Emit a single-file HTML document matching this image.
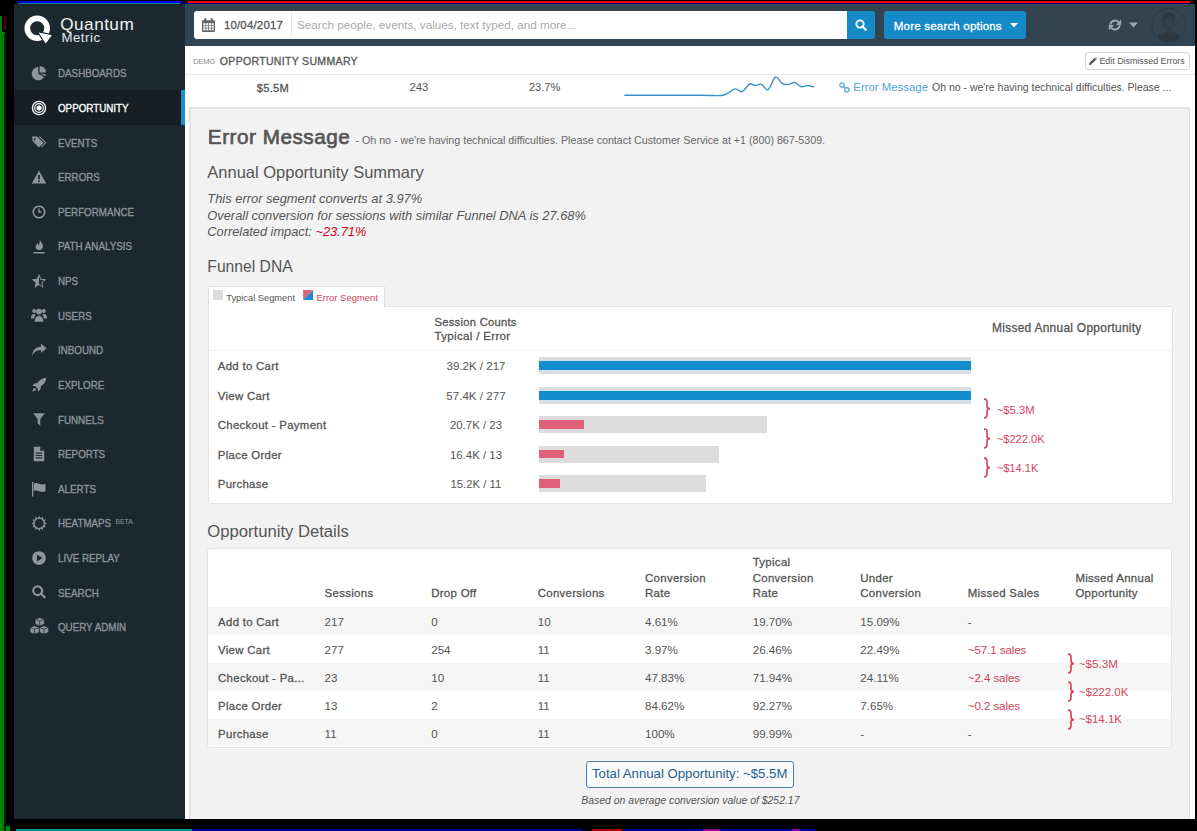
<!DOCTYPE html>
<html><head><meta charset="utf-8">
<style>
*{box-sizing:border-box;margin:0;padding:0}
html,body{width:1197px;height:831px;overflow:hidden;background:#000;font-family:"Liberation Sans",sans-serif;color:#555;position:relative}
.a{position:absolute;white-space:nowrap}
#side{left:14px;top:4px;width:171px;height:815px;background:#1c2830}
.nav{position:absolute;left:14px;width:171px;height:35px;color:#8c959c;font-size:11px;-webkit-text-stroke:0.35px #8c959c}
.nav .t{position:absolute;left:44px;white-space:nowrap;line-height:12px;transform:scaleX(0.89);transform-origin:0 0;margin-top:-0.5px}
.nav svg{position:absolute;left:16.7px;width:16px;height:16px;fill:#8c959c}
.nav.act{background:#161f26;color:#fff;-webkit-text-stroke:0.35px #fff}
.nav.act svg{fill:#fff}
.nav.act:after{content:"";position:absolute;right:0;top:0;width:4px;height:100%;background:#1b8fd0}
#hdr{left:185px;top:4px;width:1010px;height:42px;background:#324452}
#main{left:185px;top:46px;width:1010px;height:773px;background:#fff}
#panel{left:189px;top:107px;width:1001px;height:712px;background:#f2f2f2;border:2px solid #e2e3e5;border-right-color:#dcdcdc;border-right-width:1.5px;border-bottom:none}
.wp{background:#fff;border:1px solid #e4e4e4;border-radius:3px}
</style></head><body>
<div class="a" style="left:0;top:16px;width:2px;height:16px;background:#008200"></div>
<div class="a" style="left:0;top:32px;width:4.5px;height:799px;background:#008200"></div>
<div class="a" style="left:0;top:826px;width:10px;height:5px;background:#008200;border-bottom-left-radius:0;"></div>
<div class="a" style="left:4px;top:16px;width:1.5px;height:14px;background:#5a0000"></div>
<div class="a" style="left:4px;top:34px;width:2px;height:797px;background:#002200"></div>
<div class="a" style="left:18px;top:1px;width:164px;height:2px;background:#0000f0"></div>
<div class="a" style="left:18px;top:3px;width:162px;height:1px;background:#0a8a7a"></div>
<div class="a" style="left:188px;top:1px;width:1002px;height:2px;background:#f00"></div>
<div class="a" style="left:180px;top:3px;width:1010px;height:1px;background:#000080"></div>
<div class="a" style="left:16px;top:829px;width:176px;height:2px;background:#008a8a"></div>
<div class="a" style="left:192px;top:829px;width:391px;height:2px;background:#000090"></div>
<div class="a" style="left:592px;top:829px;width:30px;height:2px;background:#a00000"></div>
<div class="a" style="left:624px;top:829px;width:192px;height:2px;background:#000090"></div>
<div class="a" style="left:703px;top:829px;width:17px;height:2px;background:#900090"></div>
<div class="a" style="left:792px;top:829px;width:8px;height:2px;background:#900090"></div>
<div class="a" id="side"></div>
<svg class="a" style="left:20px;top:12px" width="36" height="36" viewBox="20 12 36 36">
<circle cx="37.2" cy="28.2" r="9.9" fill="none" stroke="#fff" stroke-width="5.7"/>
<path d="M38.6 32.4L51.8 35.3L45.7 43.6z" fill="#fff" stroke="#1c2830" stroke-width="2.4" stroke-linejoin="miter"/>
<path d="M38.6 32.4L51.8 35.3L45.7 43.6z" fill="#fff"/>
</svg>
<div class="a" style="left:60.3px;top:13.6px;color:#f2f4f5;font-size:17.2px;line-height:20px;letter-spacing:0.45px">Quantum</div>
<div class="a" style="left:61.4px;top:29.6px;color:#e3e6e8;font-size:13.3px;line-height:16px;letter-spacing:0.5px">Metric</div>
<!--S1--><div class="nav" style="top:55.00px"><svg viewBox="0 0 16 16" style="top:10px"><path d="M7.30 8.70L13.02 12.00A6.6 6.6 0 1 1 7.30 2.10z"/><path d="M8.60 7.40L8.60 1.00A6.4 6.4 0 0 1 15.00 7.40z"/><path d="M8.80 8.60L14.98 9.14A6.2 6.2 0 0 1 14.42 11.22z"/></svg><div class="t" style="top:12.8px">DASHBOARDS</div></div>
<div class="nav act" style="top:89.63px"><svg viewBox="0 0 16 16" style="top:10px" stroke="#fff"><circle cx="8" cy="8" r="6.6" style="fill:none" stroke-width="1.3"/><circle cx="8" cy="8" r="4.3" style="fill:none" stroke-width="1.2"/><circle cx="8" cy="8" r="2.2"/></svg><div class="t" style="top:12.8px">OPPORTUNITY</div></div>
<div class="nav" style="top:124.26px"><svg viewBox="0 0 16 16" style="top:10px"><path d="M1 2.5h5.2l6.3 6.3-4.6 4.6L1.6 7.1zM3.6 4.2a1 1 0 1 0 .01 0z"/><path d="M7.6 2.5h1.4l6.3 6.3-4.6 4.6-.7-.7 3.9-3.9z"/></svg><div class="t" style="top:12.8px">EVENTS</div></div>
<div class="nav" style="top:158.89px"><svg viewBox="0 0 16 16" style="top:10px"><path d="M8 1.5l7.2 13H.8zM7.1 6v4.3h1.8V6zM7.1 11.4v1.7h1.8v-1.7z" fill-rule="evenodd"/></svg><div class="t" style="top:12.8px">ERRORS</div></div>
<div class="nav" style="top:193.52px"><svg viewBox="0 0 16 16" style="top:10px"><path d="M8 1.5a6.5 6.5 0 1 0 .01 0zm0 1.6a4.9 4.9 0 1 1-.01 0zM7.3 4.5v4.2h3.5V7.4H8.7V4.5z" fill-rule="evenodd"/></svg><div class="t" style="top:12.8px">PERFORMANCE</div></div>
<div class="nav" style="top:228.15px"><svg viewBox="0 0 16 16" style="top:10px"><path d="M8.3 .6C8.9 3.6 12.2 5.3 12 8.8 11.8 11 10.2 12.1 8.2 12.1 6 12.1 4.5 10.7 4.7 8.6 4.9 6.8 6.4 5.9 6.9 4.8 7.4 6.2 7.3 7.2 7 8.1 8.9 6.6 9.1 3.6 8.3.6z"/><rect x="2.4" y="14" width="11.2" height="1.5"/></svg><div class="t" style="top:12.8px">PATH ANALYSIS</div></div>
<div class="nav" style="top:262.78px"><svg viewBox="0 0 16 16" style="top:10px"><path d="M8 1L10.06 5.77 15.23 6.25 11.33 9.68 12.47 14.75 8 12.1 3.53 14.75 4.67 9.68 .77 6.25 5.94 5.77zM8 3.6V11l3.1 1.9-.75-3.4 2.65-2.35-3.5-.35z" fill-rule="evenodd"/></svg><div class="t" style="top:12.8px">NPS</div></div>
<div class="nav" style="top:297.41px"><svg viewBox="0 0 16 16" style="top:10px"><circle cx="8" cy="4.6" r="2.9"/><circle cx="3.2" cy="4" r="2"/><circle cx="12.8" cy="4" r="2"/><path d="M3.6 14.8c0-3.6 1.8-6 4.4-6s4.4 2.4 4.4 6z"/><path d="M-.2 11.5c0-2.6 1.3-4.6 3.4-4.6.7 0 1.3.2 1.7.5-.9 1-1.6 2.4-1.8 4.1zM16.2 11.5c0-2.6-1.3-4.6-3.4-4.6-.7 0-1.3.2-1.7.5.9 1 1.6 2.4 1.8 4.1z"/></svg><div class="t" style="top:12.8px">USERS</div></div>
<div class="nav" style="top:332.04px"><svg viewBox="0 0 16 16" style="top:10px"><path d="M10 1.5l5.5 4.8L10 11V8.2c-4.2 0-6.6 1.2-8.8 5.5.4-5.4 3.5-8.6 8.8-8.9z"/></svg><div class="t" style="top:12.8px">INBOUND</div></div>
<div class="nav" style="top:366.67px"><svg viewBox="0 0 16 16" style="top:10px"><path d="M15.3.7c-4 .2-6.6 2-8.8 5.2L3.2 6.4 1.3 8.6l3 .6 2.3 2.3.6 3 2.2-1.9.5-3.3C13.2 7 15 4.6 15.3.7zM3.8 10.8c-1.3.4-2.2 2-2.3 3.7 1.7-.1 3.3-1 3.7-2.3z"/></svg><div class="t" style="top:12.8px">EXPLORE</div></div>
<div class="nav" style="top:401.30px"><svg viewBox="0 0 16 16" style="top:10px"><path d="M2.2 2.2h11.6L9.3 8.2v6.6L6.7 12.4V8.2z"/></svg><div class="t" style="top:12.8px">FUNNELS</div></div>
<div class="nav" style="top:435.93px"><svg viewBox="0 0 16 16" style="top:10px"><path d="M2.8.8h6.6l3.8 3.8v10.6H2.8z"/><path d="M9.2.8v3.9h4z" style="fill:#1c2830"/><path d="M4.8 6.6h6.4v1.2H4.8zM4.8 8.9h6.4v1.2H4.8zM4.8 11.2h6.4v1.2H4.8z" style="fill:#1c2830"/></svg><div class="t" style="top:12.8px">REPORTS</div></div>
<div class="nav" style="top:470.56px"><svg viewBox="0 0 16 16" style="top:10px"><rect x="1" y="1" width="1.3" height="14.5"/><path d="M2.8 2.5c2.5-1.3 4.5 0 6.3.6 1.8.6 3.6.4 5.4-.4v7.5c-1.8.9-3.6 1-5.4.4-1.8-.6-3.8-1.8-6.3-.6z"/></svg><div class="t" style="top:12.8px">ALERTS</div></div>
<div class="nav" style="top:505.19px"><svg viewBox="0 0 16 16" style="top:10px"><path d="M8.20 0.70L6.94 2.94L9.46 2.94zM12.05 1.73L9.84 3.04L12.02 4.30zM14.87 4.55L12.30 4.58L13.56 6.76zM15.90 8.40L13.66 7.14L13.66 9.66zM14.87 12.25L13.56 10.04L12.30 12.22zM12.05 15.07L12.02 12.50L9.84 13.76zM8.20 16.10L9.46 13.86L6.94 13.86zM4.35 15.07L6.56 13.76L4.38 12.50zM1.53 12.25L4.10 12.22L2.84 10.04zM0.50 8.40L2.74 9.66L2.74 7.14zM1.53 4.55L2.84 6.76L4.10 4.58zM4.35 1.73L4.38 4.30L6.56 3.04z"/><circle cx="8.2" cy="8.4" r="5.2" style="fill:none" stroke="#8c959c" stroke-width="1.3"/></svg><div class="t" style="top:12.8px">HEATMAPS<span style="font-size:7.6px;-webkit-text-stroke:0;position:relative;top:-3.2px;margin-left:5px">BETA</span></div></div>
<div class="nav" style="top:539.82px"><svg viewBox="0 0 16 16" style="top:10px"><path d="M8 1.2a6.8 6.8 0 1 0 .01 0zM6 4.6v6.8l5.4-3.4z" fill-rule="evenodd"/></svg><div class="t" style="top:12.8px">LIVE REPLAY</div></div>
<div class="nav" style="top:574.45px"><svg viewBox="0 0 16 16" style="top:10px"><path d="M6.6 1.3a5.4 5.4 0 1 0 3.2 9.8l3.7 3.7 1.6-1.6-3.7-3.7A5.4 5.4 0 0 0 6.6 1.3zm0 2a3.4 3.4 0 1 1-.01 0z" fill-rule="evenodd"/></svg><div class="t" style="top:12.8px">SEARCH</div></div>
<div class="nav" style="top:609.08px"><svg viewBox="0 0 16 16" style="top:8.5px;left:14.5px;width:20px;height:19px"><g stroke="#1c2830" stroke-width="0.6" stroke-linejoin="round"><path d="M8.6 -.4l3.9 1.5v4.1l-3.9 1.5-3.9-1.5V1.1z"/><path d="M4.3 6.5l3.9 1.5v4.1l-3.9 1.5L.4 12.1V8z"/><path d="M12.2 6.5l3.9 1.5v4.1l-3.9 1.5-3.9-1.5V8z"/><path d="M4.7 1.1l3.9 1.5 3.9-1.5M8.6 2.6v4.1M.4 8l3.9 1.5L8.2 8M4.3 9.5v4.1M8.3 8l3.9 1.5L16.1 8M12.2 9.5v4.1" style="fill:none"/></g></svg><div class="t" style="top:12.8px">QUERY ADMIN</div></div><!--S1END-->
<div class="a" id="hdr"></div>
<div class="a" style="left:194px;top:11px;width:653px;height:28px;background:#fff;border-radius:3px 0 0 3px"></div>
<svg class="a" style="left:202px;top:18px" width="13" height="14" viewBox="0 0 13 14"><path d="M0 3.2Q0 2.2 1 2.2H2.3V1.2Q2.3 0 3.3 0 4.3 0 4.3 1.2V2.2H8.7V1.2Q8.7 0 9.7 0 10.7 0 10.7 1.2V2.2H12Q13 2.2 13 3.2V13Q13 14 12 14H1Q0 14 0 13z" fill="#666"/><g fill="#fff"><rect x="1.3" y="5.2" width="2.2" height="1.9"/><rect x="4.2" y="5.2" width="2.1" height="1.9"/><rect x="7" y="5.2" width="2.1" height="1.9"/><rect x="9.7" y="5.2" width="2.1" height="1.9"/><rect x="1.3" y="7.8" width="2.2" height="1.9"/><rect x="4.2" y="7.8" width="2.1" height="1.9"/><rect x="7" y="7.8" width="2.1" height="1.9"/><rect x="9.7" y="7.8" width="2.1" height="1.9"/><rect x="1.3" y="10.4" width="2.2" height="1.9"/><rect x="4.2" y="10.4" width="2.1" height="1.9"/><rect x="7" y="10.4" width="2.1" height="1.9"/><rect x="9.7" y="10.4" width="2.1" height="1.9"/></g></svg>
<div class="a" style="left:223.9px;top:19.9px;font-size:11.43px;line-height:11.43px;color:#555;-webkit-text-stroke:0.3px #555;letter-spacing:0.2px">10/04/2017</div>
<div class="a" style="left:291px;top:12px;width:1px;height:26px;background:#e6e9ee"></div>
<div class="a" style="left:297px;top:18px;font-size:11.7px;line-height:14px;color:#a9a9a9">Search people, events, values, text typed, and more...</div>
<div class="a" style="left:847px;top:11px;width:28px;height:28px;background:#168ac7;border-radius:0 3px 3px 0"></div>
<svg class="a" style="left:855px;top:19px" width="12" height="12" viewBox="0 0 12 12"><circle cx="5" cy="5" r="3.6" fill="none" stroke="#fff" stroke-width="1.9"/><path d="M7.5 7.5L10.6 10.6" stroke="#fff" stroke-width="2.2" stroke-linecap="round"/></svg>
<div class="a" style="left:884px;top:11px;width:142px;height:28px;background:#168ac7;border-radius:3px"></div>
<div class="a" style="left:893.8px;top:20.0px;font-size:11.62px;line-height:11.62px;color:#fff;-webkit-text-stroke:0.3px #fff;letter-spacing:0.15px">More search options</div>
<svg class="a" style="left:1010px;top:23px" width="8" height="5" viewBox="0 0 8 5"><path d="M0 0H8L4 4.5z" fill="#fff"/></svg>
<svg class="a" style="left:1108px;top:18px" width="14" height="14" viewBox="0 0 14 14"><g fill="none" stroke="#9aa8b3" stroke-width="2"><path d="M2.3 6.6A4.9 4.9 0 0 1 10.8 4.2"/><path d="M11.7 7.4A4.9 4.9 0 0 1 3.2 9.8"/></g><path d="M13.2 1.6V6.9H7.9z" fill="#9aa8b3"/><path d="M.8 12.4V7.1H6.1z" fill="#9aa8b3"/></svg>
<svg class="a" style="left:1129px;top:22px" width="9" height="6" viewBox="0 0 9 6"><path d="M0 0.5H9L4.5 5.5z" fill="#9aa8b3"/></svg>
<svg class="a" style="left:1151px;top:7px" width="36" height="36" viewBox="0 0 36 36"><defs><clipPath id="cc"><circle cx="17.7" cy="18" r="16.6"/></clipPath></defs><circle cx="17.7" cy="18" r="16.8" fill="#324452" stroke="#2b3742" stroke-width="1"/><g clip-path="url(#cc)"><path d="M4 38Q5 25.5 17.7 24.5Q30.5 25.5 31.5 38z" fill="#2e3840"/><path d="M14.8 20V25.5H20.6V20z" fill="#323e48"/><ellipse cx="17.7" cy="14.5" rx="5.8" ry="7" fill="#30404c" stroke="#29384a" stroke-width="0.9"/><path d="M11.8 14Q11 5.6 17.8 5.8Q24.6 5.6 23.6 14Q22.5 9.5 17.8 9.6Q13 9.5 11.8 14z" fill="#2b3640"/></g></svg>

<div class="a" id="main"></div>
<!--SUBHEADER-->
<div class="a" id="panel"></div>
<!--CONTENT-->
<!--C1--><div class="a" style="left:193.2px;top:58.0px;font-size:7.40px;line-height:7.40px;color:#888;letter-spacing:-0.1px">DEMO</div>
<div class="a" style="left:219.8px;top:56.0px;font-size:10.55px;line-height:10.55px;color:#555;-webkit-text-stroke:0.3px #555;letter-spacing:0.3px">OPPORTUNITY SUMMARY</div>
<div class="a" style="left:1085px;top:51.5px;width:105px;height:18.5px;border:1px solid #d5d5d5;border-radius:3px;background:#fff"></div>
<svg class="a" style="left:1089px;top:57px" width="8" height="8" viewBox="0 0 8 8"><path d="M0 8L.5 5.8 5.6.7 7.3 2.4 2.2 7.5zM6.1.2l.6-.2 1.3 1.3-.2.6z" fill="#555"/></svg>
<div class="a" style="left:1099.4px;top:57.0px;font-size:8.90px;line-height:8.90px;color:#555">Edit Dismissed Errors</div>
<div class="a" style="left:185px;top:73.5px;width:1010px;height:1px;background:#e6e6e6"></div>
<div class="a" style="left:256.7px;top:83.0px;font-size:11.10px;line-height:11.10px;color:#555;-webkit-text-stroke:0.3px #555;letter-spacing:0.3px">$5.5M</div>
<div class="a" style="left:409.4px;top:82.0px;font-size:11.40px;line-height:11.40px;color:#555">243</div>
<div class="a" style="left:528.9px;top:82.0px;font-size:11.05px;line-height:11.05px;color:#555">23.7%</div>
<svg class="a" style="left:620px;top:70px" width="200" height="30" viewBox="0 0 200 30"><path d="M4.3 25.3 C6.9 25.3 7.4 25.3 20.0 25.3 C32.6 25.3 66.2 25.2 80.0 25.2 C93.8 25.2 97.2 26.3 103.0 25.3 C108.8 24.2 111.8 19.5 115.0 18.9 C118.2 18.3 119.5 22.4 122.0 21.6 C124.5 20.8 127.5 15.0 129.7 14.0 C131.9 13.0 133.0 15.5 135.0 15.5 C137.0 15.5 139.4 13.6 141.6 14.3 C143.8 15.0 145.7 21.0 148.0 19.8 C150.3 18.6 153.1 8.1 155.4 7.0 C157.7 5.9 159.9 12.2 162.0 13.4 C164.1 14.7 165.9 14.7 168.0 14.5 C170.1 14.3 172.5 12.1 174.7 12.5 C176.9 12.9 178.8 16.2 181.0 16.7 C183.2 17.2 185.4 15.5 187.6 15.5 C189.8 15.5 192.9 16.8 194.0 17.0" fill="none" stroke="#3a8fc6" stroke-width="1.4" stroke-linejoin="round"/></svg>
<svg class="a" style="left:839px;top:81.5px" width="11" height="11" viewBox="0 0 11 11"><g fill="none" stroke="#57a9d8" stroke-width="1.3"><circle cx="3" cy="3" r="2.2"/><circle cx="7.8" cy="7.8" r="2.2"/><path d="M4.6 4.6l1.6 1.6"/></g></svg>
<div class="a" style="left:853.3px;top:82.0px;font-size:11.40px;line-height:11.40px;color:#4fa3d6">Error Message</div>
<div class="a" style="left:932.0px;top:82.0px;font-size:10.50px;line-height:10.50px;color:#555">Oh no - we're having technical difficulties. Please ...</div>
<div class="a" style="left:207.8px;top:127.0px;font-size:20.75px;line-height:20.75px;color:#555;-webkit-text-stroke:0.3px #555;letter-spacing:0.5px;-webkit-text-stroke:0.65px #555">Error Message</div>
<div class="a" style="left:355.4px;top:135.0px;font-size:10.70px;line-height:10.70px;color:#666">- Oh no - we're having technical difficulties. Please contact Customer Service at +1 (800) 867-5309.</div>
<div class="a" style="left:207.3px;top:164.0px;font-size:16.50px;line-height:16.50px;color:#555">Annual Opportunity Summary</div>
<div class="a" style="left:207.3px;top:193.0px;font-size:12.90px;line-height:12.90px;color:#555;font-style:italic">This error segment converts at 3.97%</div>
<div class="a" style="left:207.3px;top:210.0px;font-size:12.85px;line-height:12.85px;color:#555;font-style:italic">Overall conversion for sessions with similar Funnel DNA is 27.68%</div>
<div class="a" style="left:207.3px;top:226.4px;font-size:12.81px;line-height:12.81px;font-style:italic;color:#555">Correlated impact: <span style="color:#d0021b">~23.71%</span></div>
<div class="a" style="left:207.3px;top:259.0px;font-size:15.70px;line-height:15.70px;color:#555">Funnel DNA</div><!--C1END-->
<!--T1--><div class="a" style="left:207.5px;top:285.5px;width:177px;height:22px;background:#fff;border:1px solid #e0e0e0;border-bottom:none;border-radius:2px 2px 0 0;z-index:2"></div>
<div class="a" style="left:213px;top:290.4px;width:10px;height:10px;background:#dcdcdc;z-index:3"></div>
<svg class="a" style="left:303px;top:290.4px;z-index:3" width="10.3" height="10" viewBox="0 0 10 10"><path d="M0 0H10L0 10z" fill="#e0607a"/><path d="M10 0V10H0z" fill="#1a8ecc"/></svg>
<div class="a" style="left:226.3px;top:294.0px;font-size:9.30px;line-height:9.30px;color:#555;z-index:3">Typical Segment</div>
<div class="a" style="left:316.5px;top:293.0px;font-size:9.45px;line-height:9.45px;color:#cf3d5c;z-index:3">Error Segment</div>
<div class="a wp" style="left:207.5px;top:306px;width:965px;height:198px"></div>
<div class="a" style="left:434.5px;top:317.0px;font-size:11.15px;line-height:11.15px;color:#555;-webkit-text-stroke:0.3px #555;letter-spacing:0.3px">Session Counts</div>
<div class="a" style="left:434.5px;top:330.0px;font-size:11.60px;line-height:11.60px;color:#555;-webkit-text-stroke:0.3px #555;letter-spacing:0.3px">Typical / Error</div>
<div class="a" style="left:992.0px;top:323.0px;font-size:11.90px;line-height:11.90px;color:#555;-webkit-text-stroke:0.3px #555;letter-spacing:0.3px">Missed Annual Opportunity</div>
<div class="a" style="left:208.5px;top:349.5px;width:963px;height:1px;background:#f0f0f0"></div>
<div class="a" style="left:217.8px;top:361.0px;font-size:11.40px;line-height:11.40px;color:#555;-webkit-text-stroke:0.3px #555;letter-spacing:0.3px">Add to Cart</div>
<div class="a" style="left:446.6px;top:361.0px;font-size:11.50px;line-height:11.50px;color:#555">39.2K / 217</div>
<div class="a" style="left:538.7px;top:357.1px;width:432.3px;height:17px;background:#dcdcdc"></div>
<div class="a" style="left:538.7px;top:360.1px;width:432.3px;height:11px;background:#cfe3f3"></div>
<div class="a" style="left:538.7px;top:361.1px;width:432.3px;height:9px;background:#138dcc"></div>
<div class="a" style="left:217.8px;top:391.0px;font-size:11.40px;line-height:11.40px;color:#555;-webkit-text-stroke:0.3px #555;letter-spacing:0.3px">View Cart</div>
<div class="a" style="left:446.3px;top:390.0px;font-size:11.60px;line-height:11.60px;color:#555">57.4K / 277</div>
<div class="a" style="left:538.7px;top:386.6px;width:432.3px;height:17px;background:#dcdcdc"></div>
<div class="a" style="left:538.7px;top:389.6px;width:432.3px;height:11px;background:#cfe3f3"></div>
<div class="a" style="left:538.7px;top:390.6px;width:432.3px;height:9px;background:#138dcc"></div>
<div class="a" style="left:217.8px;top:420.0px;font-size:11.40px;line-height:11.40px;color:#555;-webkit-text-stroke:0.3px #555;letter-spacing:0.3px">Checkout - Payment</div>
<div class="a" style="left:449.9px;top:420.0px;font-size:11.45px;line-height:11.45px;color:#555">20.7K / 23</div>
<div class="a" style="left:538.7px;top:416.1px;width:228.3px;height:17px;background:#dcdcdc"></div>
<div class="a" style="left:538.7px;top:420.1px;width:45.6px;height:8.5px;background:#e0607a"></div>
<div class="a" style="left:217.8px;top:450.0px;font-size:11.40px;line-height:11.40px;color:#555;-webkit-text-stroke:0.3px #555;letter-spacing:0.3px">Place Order</div>
<div class="a" style="left:449.9px;top:450.0px;font-size:11.45px;line-height:11.45px;color:#555">16.4K / 13</div>
<div class="a" style="left:538.7px;top:445.6px;width:180.4px;height:17px;background:#dcdcdc"></div>
<div class="a" style="left:538.7px;top:449.6px;width:25.6px;height:8.5px;background:#e0607a"></div>
<div class="a" style="left:217.8px;top:479.0px;font-size:11.40px;line-height:11.40px;color:#555;-webkit-text-stroke:0.3px #555;letter-spacing:0.3px">Purchase</div>
<div class="a" style="left:450.5px;top:479.0px;font-size:11.35px;line-height:11.35px;color:#555">15.2K / 11</div>
<div class="a" style="left:538.7px;top:475.1px;width:167.3px;height:17px;background:#dcdcdc"></div>
<div class="a" style="left:538.7px;top:479.1px;width:21.7px;height:8.5px;background:#e0607a"></div>
<svg class="a" style="left:983px;top:398.2px" width="9" height="22" viewBox="0 0 9 22"><path d="M1 1.2C3.5 1.2 4 2 4 4.5V8C4 9.5 4.8 10.5 7 10.6 4.8 10.8 4 11.6 4 13.2V16.6C4 19 3.5 20 1 20" fill="none" stroke="#d4485f" stroke-width="1.7"/></svg>
<div class="a" style="left:996.7px;top:405.0px;font-size:11.25px;line-height:11.25px;color:#d14760">~$5.3M</div>
<svg class="a" style="left:983px;top:427.8px" width="9" height="22" viewBox="0 0 9 22"><path d="M1 1.2C3.5 1.2 4 2 4 4.5V8C4 9.5 4.8 10.5 7 10.6 4.8 10.8 4 11.6 4 13.2V16.6C4 19 3.5 20 1 20" fill="none" stroke="#d4485f" stroke-width="1.7"/></svg>
<div class="a" style="left:996.7px;top:434.0px;font-size:11.15px;line-height:11.15px;color:#d14760">~$222.0K</div>
<svg class="a" style="left:983px;top:457.4px" width="9" height="22" viewBox="0 0 9 22"><path d="M1 1.2C3.5 1.2 4 2 4 4.5V8C4 9.5 4.8 10.5 7 10.6 4.8 10.8 4 11.6 4 13.2V16.6C4 19 3.5 20 1 20" fill="none" stroke="#d4485f" stroke-width="1.7"/></svg>
<div class="a" style="left:996.7px;top:463.0px;font-size:11.10px;line-height:11.10px;color:#d14760">~$14.1K</div>
<div class="a" style="left:207.3px;top:524.0px;font-size:16.65px;line-height:16.65px;color:#555">Opportunity Details</div>
<div class="a wp" style="left:207px;top:547.5px;width:965px;height:200px"></div>
<div class="a" style="left:324.6px;top:588.0px;font-size:11.45px;line-height:11.45px;color:#555;-webkit-text-stroke:0.3px #555;letter-spacing:0.3px">Sessions</div>
<div class="a" style="left:431.2px;top:588.0px;font-size:11.45px;line-height:11.45px;color:#555;-webkit-text-stroke:0.3px #555;letter-spacing:0.3px">Drop Off</div>
<div class="a" style="left:537.7px;top:588.0px;font-size:11.45px;line-height:11.45px;color:#555;-webkit-text-stroke:0.3px #555;letter-spacing:0.3px">Conversions</div>
<div class="a" style="left:645.0px;top:573.0px;font-size:11.45px;line-height:11.45px;color:#555;-webkit-text-stroke:0.3px #555;letter-spacing:0.3px">Conversion</div>
<div class="a" style="left:645.0px;top:588.0px;font-size:11.45px;line-height:11.45px;color:#555;-webkit-text-stroke:0.3px #555;letter-spacing:0.3px">Rate</div>
<div class="a" style="left:752.7px;top:557.0px;font-size:11.45px;line-height:11.45px;color:#555;-webkit-text-stroke:0.3px #555;letter-spacing:0.3px">Typical</div>
<div class="a" style="left:752.7px;top:573.0px;font-size:11.45px;line-height:11.45px;color:#555;-webkit-text-stroke:0.3px #555;letter-spacing:0.3px">Conversion</div>
<div class="a" style="left:752.7px;top:588.0px;font-size:11.45px;line-height:11.45px;color:#555;-webkit-text-stroke:0.3px #555;letter-spacing:0.3px">Rate</div>
<div class="a" style="left:860.3px;top:573.0px;font-size:11.45px;line-height:11.45px;color:#555;-webkit-text-stroke:0.3px #555;letter-spacing:0.3px">Under</div>
<div class="a" style="left:860.3px;top:588.0px;font-size:11.45px;line-height:11.45px;color:#555;-webkit-text-stroke:0.3px #555;letter-spacing:0.3px">Conversion</div>
<div class="a" style="left:967.8px;top:588.0px;font-size:11.45px;line-height:11.45px;color:#555;-webkit-text-stroke:0.3px #555;letter-spacing:0.3px">Missed Sales</div>
<div class="a" style="left:1075.4px;top:573.0px;font-size:11.45px;line-height:11.45px;color:#555;-webkit-text-stroke:0.3px #555;letter-spacing:0.3px">Missed Annual</div>
<div class="a" style="left:1075.4px;top:588.0px;font-size:11.45px;line-height:11.45px;color:#555;-webkit-text-stroke:0.3px #555;letter-spacing:0.3px">Opportunity</div>
<div class="a" style="left:208px;top:607.1px;width:963px;height:28px;background:#f6f6f6"></div>
<div class="a" style="left:208px;top:635.1px;width:963px;height:28px;background:#fff"></div>
<div class="a" style="left:208px;top:663.0px;width:963px;height:28px;background:#f6f6f6"></div>
<div class="a" style="left:208px;top:691.0px;width:963px;height:28px;background:#fff"></div>
<div class="a" style="left:208px;top:719.0px;width:963px;height:27.4px;background:#f6f6f6"></div>
<div class="a" style="left:218.1px;top:617.0px;font-size:11.40px;line-height:11.40px;color:#555;-webkit-text-stroke:0.3px #555;letter-spacing:0.3px">Add to Cart</div>
<div class="a" style="left:324.6px;top:616.0px;font-size:11.60px;line-height:11.60px;color:#555">217</div>
<div class="a" style="left:431.2px;top:616.0px;font-size:11.60px;line-height:11.60px;color:#555">0</div>
<div class="a" style="left:537.7px;top:616.0px;font-size:11.60px;line-height:11.60px;color:#555">10</div>
<div class="a" style="left:645.0px;top:616.0px;font-size:11.60px;line-height:11.60px;color:#555">4.61%</div>
<div class="a" style="left:752.7px;top:616.0px;font-size:11.60px;line-height:11.60px;color:#555">19.70%</div>
<div class="a" style="left:860.3px;top:616.0px;font-size:11.60px;line-height:11.60px;color:#555">15.09%</div>
<div class="a" style="left:967.8px;top:616.0px;font-size:11.60px;line-height:11.60px;color:#555">-</div>
<div class="a" style="left:218.1px;top:645.0px;font-size:11.40px;line-height:11.40px;color:#555;-webkit-text-stroke:0.3px #555;letter-spacing:0.3px">View Cart</div>
<div class="a" style="left:324.6px;top:644.0px;font-size:11.60px;line-height:11.60px;color:#555">277</div>
<div class="a" style="left:431.2px;top:644.0px;font-size:11.60px;line-height:11.60px;color:#555">254</div>
<div class="a" style="left:537.7px;top:644.0px;font-size:11.60px;line-height:11.60px;color:#555">11</div>
<div class="a" style="left:645.0px;top:644.0px;font-size:11.60px;line-height:11.60px;color:#555">3.97%</div>
<div class="a" style="left:752.7px;top:644.0px;font-size:11.60px;line-height:11.60px;color:#555">26.46%</div>
<div class="a" style="left:860.3px;top:644.0px;font-size:11.60px;line-height:11.60px;color:#555">22.49%</div>
<div class="a" style="left:967.8px;top:644.0px;font-size:11.60px;line-height:11.60px;color:#cf3f5a;letter-spacing:-0.1px">~57.1 sales</div>
<div class="a" style="left:218.1px;top:673.0px;font-size:11.40px;line-height:11.40px;color:#555;-webkit-text-stroke:0.3px #555;letter-spacing:0.3px">Checkout - Pa...</div>
<div class="a" style="left:324.6px;top:672.0px;font-size:11.60px;line-height:11.60px;color:#555">23</div>
<div class="a" style="left:431.2px;top:672.0px;font-size:11.60px;line-height:11.60px;color:#555">10</div>
<div class="a" style="left:537.7px;top:672.0px;font-size:11.60px;line-height:11.60px;color:#555">11</div>
<div class="a" style="left:645.0px;top:672.0px;font-size:11.60px;line-height:11.60px;color:#555">47.83%</div>
<div class="a" style="left:752.7px;top:672.0px;font-size:11.60px;line-height:11.60px;color:#555">71.94%</div>
<div class="a" style="left:860.3px;top:672.0px;font-size:11.60px;line-height:11.60px;color:#555">24.11%</div>
<div class="a" style="left:967.8px;top:672.0px;font-size:11.60px;line-height:11.60px;color:#cf3f5a;letter-spacing:-0.1px">~2.4 sales</div>
<div class="a" style="left:218.1px;top:701.0px;font-size:11.40px;line-height:11.40px;color:#555;-webkit-text-stroke:0.3px #555;letter-spacing:0.3px">Place Order</div>
<div class="a" style="left:324.6px;top:700.0px;font-size:11.60px;line-height:11.60px;color:#555">13</div>
<div class="a" style="left:431.2px;top:700.0px;font-size:11.60px;line-height:11.60px;color:#555">2</div>
<div class="a" style="left:537.7px;top:700.0px;font-size:11.60px;line-height:11.60px;color:#555">11</div>
<div class="a" style="left:645.0px;top:700.0px;font-size:11.60px;line-height:11.60px;color:#555">84.62%</div>
<div class="a" style="left:752.7px;top:700.0px;font-size:11.60px;line-height:11.60px;color:#555">92.27%</div>
<div class="a" style="left:860.3px;top:700.0px;font-size:11.60px;line-height:11.60px;color:#555">7.65%</div>
<div class="a" style="left:967.8px;top:700.0px;font-size:11.60px;line-height:11.60px;color:#cf3f5a;letter-spacing:-0.1px">~0.2 sales</div>
<div class="a" style="left:218.1px;top:729.0px;font-size:11.40px;line-height:11.40px;color:#555;-webkit-text-stroke:0.3px #555;letter-spacing:0.3px">Purchase</div>
<div class="a" style="left:324.6px;top:728.0px;font-size:11.60px;line-height:11.60px;color:#555">11</div>
<div class="a" style="left:431.2px;top:728.0px;font-size:11.60px;line-height:11.60px;color:#555">0</div>
<div class="a" style="left:537.7px;top:728.0px;font-size:11.60px;line-height:11.60px;color:#555">11</div>
<div class="a" style="left:645.0px;top:728.0px;font-size:11.60px;line-height:11.60px;color:#555">100%</div>
<div class="a" style="left:752.7px;top:728.0px;font-size:11.60px;line-height:11.60px;color:#555">99.99%</div>
<div class="a" style="left:860.3px;top:728.0px;font-size:11.60px;line-height:11.60px;color:#555">-</div>
<div class="a" style="left:967.8px;top:728.0px;font-size:11.60px;line-height:11.60px;color:#555">-</div>
<svg class="a" style="left:1067px;top:652.6px" width="9" height="22" viewBox="0 0 9 22"><path d="M1 1.2C3.5 1.2 4 2 4 4.5V8C4 9.5 4.8 10.5 7 10.6 4.8 10.8 4 11.6 4 13.2V16.6C4 19 3.5 20 1 20" fill="none" stroke="#d4485f" stroke-width="1.7"/></svg>
<div class="a" style="left:1078.8px;top:658.0px;font-size:11.70px;line-height:11.70px;color:#d14760">~$5.3M</div>
<svg class="a" style="left:1067px;top:680.6px" width="9" height="22" viewBox="0 0 9 22"><path d="M1 1.2C3.5 1.2 4 2 4 4.5V8C4 9.5 4.8 10.5 7 10.6 4.8 10.8 4 11.6 4 13.2V16.6C4 19 3.5 20 1 20" fill="none" stroke="#d4485f" stroke-width="1.7"/></svg>
<div class="a" style="left:1078.8px;top:687.0px;font-size:11.50px;line-height:11.50px;color:#d14760">~$222.0K</div>
<svg class="a" style="left:1067px;top:708.6px" width="9" height="22" viewBox="0 0 9 22"><path d="M1 1.2C3.5 1.2 4 2 4 4.5V8C4 9.5 4.8 10.5 7 10.6 4.8 10.8 4 11.6 4 13.2V16.6C4 19 3.5 20 1 20" fill="none" stroke="#d4485f" stroke-width="1.7"/></svg>
<div class="a" style="left:1078.8px;top:714.0px;font-size:11.50px;line-height:11.50px;color:#d14760">~$14.1K</div>
<div class="a" style="left:586.3px;top:760.7px;width:207.3px;height:27.8px;border:1.5px solid #4a80ab;border-radius:3px;background:#fafafa"></div>
<div class="a" style="left:592.0px;top:767.0px;font-size:13.20px;line-height:13.20px;color:#1f5f94">Total Annual Opportunity: ~$5.5M</div>
<div class="a" style="left:581.3px;top:796.0px;font-size:10.45px;line-height:10.45px;color:#555;font-style:italic">Based on average conversion value of $252.17</div><!--T1END-->
</body></html>
